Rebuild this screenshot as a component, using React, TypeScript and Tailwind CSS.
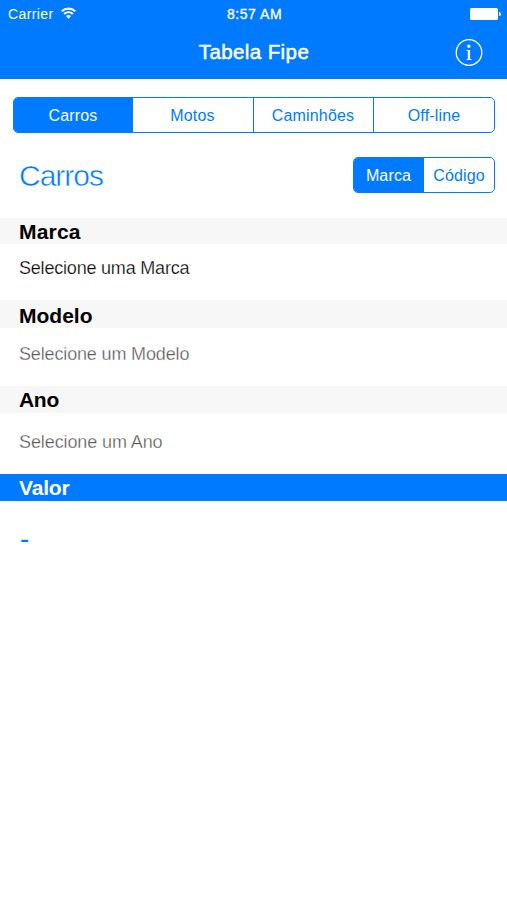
import type { ReactNode } from "react";

function Tab({ children, active = false, size = "flex-1 pr-[3px]", first = false }: { children: ReactNode; active?: boolean; size?: string; first?: boolean }) {
  return (
    <button
      className={`flex items-center justify-center border-[#007aff] pt-0.5 text-[16px] leading-none tracking-[0.15px] whitespace-nowrap ${size} ${
        first ? "" : "border-l"
      } ${active ? "bg-[#007aff] text-white" : "text-[#007aff]"}`}
    >
      {children}
    </button>
  );
}

function StatusBar() {
  return (
    <div className="grid h-[27px] grid-cols-3 items-center pl-2 pr-[6px] text-[14px] leading-none">
      <div className="flex items-center gap-[7px]">
        <span className="pt-px tracking-[0.4px]">Carrier</span>
        <svg width="15" height="12" viewBox="0 0 15 12" fill="none" stroke="white" strokeWidth="2.1" className="mb-0.5">
          <path d="M0.7 4.3C4.5 0.7 10.5 0.7 14.3 4.3" />
          <path d="M3.1 6.9C5.6 4.6 9.4 4.6 11.9 6.9" />
          <path d="M7.5 11.7L5 9C6.5 7.7 8.5 7.7 10 9Z" fill="white" stroke="none" />
        </svg>
      </div>
      <span className="pt-px text-center tracking-[0.55px] [-webkit-text-stroke:0.3px_white]">8:57 AM</span>
      <div className="flex items-center justify-end">
        <div className="h-3 w-7 rounded-[1.5px] bg-white" />
        <div className="ml-px h-1 w-[2px] rounded-r-full bg-white" />
      </div>
    </div>
  );
}

function Section({ title, value, head, body }: { title: string; value: string; head: string; body: string }) {
  return (
    <section>
      <h2 className={`flex items-center pl-[19px] text-[21px] font-bold leading-none ${head}`}>{title}</h2>
      <p className={`flex items-center leading-none ${body}`}>{value}</p>
    </section>
  );
}

export default function App() {
  return (
    <div className="h-[900px] w-[507px] overflow-hidden bg-white font-['Liberation_Sans',Arial,sans-serif]">
      <header className="h-[79px] bg-[#007aff] text-white">
        <StatusBar />
        <div className="grid h-[51px] grid-cols-[1fr_auto_1fr] items-center">
          <span />
          <h1 className="pl-px text-[20.5px] leading-none tracking-[0.4px] [-webkit-text-stroke:0.5px_white]">Tabela Fipe</h1>
          <svg width="28" height="28" viewBox="0 0 28 28" className="mr-6 justify-self-end">
            <circle cx="14" cy="13.5" r="12.8" fill="none" stroke="white" strokeWidth="1.3" />
            <circle cx="13.8" cy="7.3" r="1.7" fill="white" />
            <path d="M11.5 11H15.1V19.9H16.4V20.9H11.5V19.9H12.8V12H11.5Z" fill="white" />
          </svg>
        </div>
      </header>

      <nav className="ml-[13px] mr-[12px] mt-[18px] flex h-9 overflow-hidden rounded-[5px] border border-[#007aff]">
        <Tab active first size="w-[118px]">Carros</Tab>
        <Tab size="w-[121px] pr-px">Motos</Tab>
        <Tab size="w-[120px] pr-px">Caminhões</Tab>
        <Tab size="flex-1">Off-line</Tab>
      </nav>

      <div className="mr-[12px] mt-6 flex h-9 items-center justify-between pl-[19px]">
        <span className="pt-px text-[30px] leading-none tracking-[-1px] text-[#007aff] [-webkit-text-stroke:0.5px_white]">Carros</span>
        <div className="flex h-9 w-[142px] overflow-hidden rounded-[5px] border border-[#007aff]">
          <Tab active first size="w-[69px]">Marca</Tab>
          <Tab size="flex-1">Código</Tab>
        </div>
      </div>

      <main className="mt-[25px]">
        <Section title="Marca" value="Selecione uma Marca" head="h-[26px] bg-[#f7f7f7] tracking-[0.2px] text-black" body="h-[56px] pb-[9px] pl-[19px] text-[18px] tracking-[-0.2px] text-black [-webkit-text-stroke:0.25px_white]" />
        <Section title="Modelo" value="Selecione um Modelo" head="h-7 bg-[#f7f7f7] pt-[3px] text-black" body="h-[58px] pb-[7px] pl-[19px] text-[18px] tracking-[-0.15px] text-[#555] [-webkit-text-stroke:0.3px_white]" />
        <Section title="Ano" value="Selecione um Ano" head="h-[27px] bg-[#f7f7f7] tracking-[-0.3px] text-black" body="h-[61px] pb-[4px] pl-[19px] text-[18px] tracking-[-0.1px] text-[#555] [-webkit-text-stroke:0.3px_white]" />
        <Section title="Valor" value="-" head="h-[27px] bg-[#007aff] tracking-[-0.2px] text-white" body="h-[76px] pl-[20px] text-[28px] text-[#007aff]" />
      </main>
    </div>
  );
}
